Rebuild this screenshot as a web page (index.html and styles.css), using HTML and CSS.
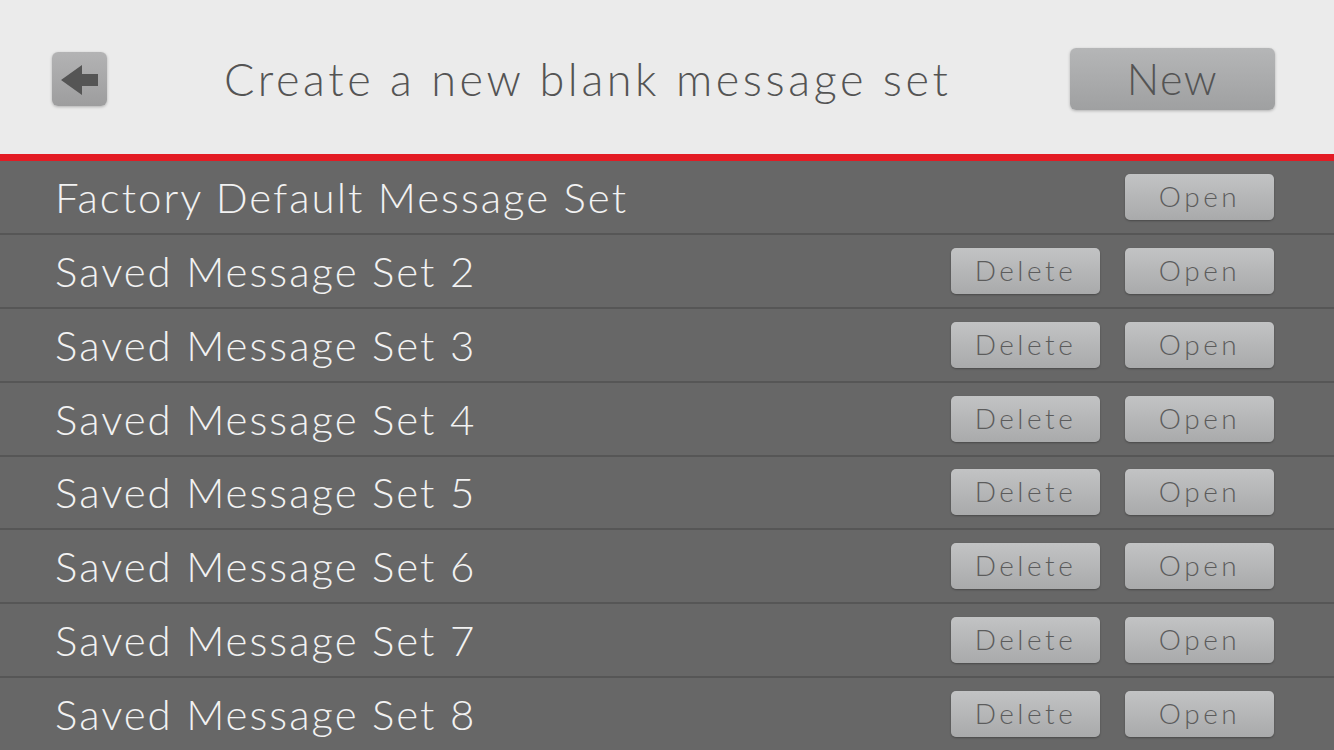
FILE: index.html
```html
<!DOCTYPE html>
<html lang="en">
<head>
    <meta charset="UTF-8">
    <meta name="viewport" content="width=device-width, initial-scale=1.0">
    <title>Message Sets</title>
    <link rel="stylesheet" href="styles.css">
</head>
<body>

<div class="screen">
    <!-- Top bar -->
    <div class="top-bar">
        <button class="back-btn" type="button" aria-label="Back">
            <svg width="55" height="54" viewBox="0 0 55 54">
                <path d="M9 28 L30 13 L30 22 L46 22 L46 34 L30 34 L30 43 Z" fill="#555"/>
            </svg>
        </button>
        <h1 class="title">Create a new blank message set</h1>
        <button class="new-btn" type="button">New</button>
    </div>

    <!-- Saved sets list -->
    <div class="set-list">
        <div class="set-row">
            <span class="set-name">Factory Default Message Set</span>
            <div class="row-actions">
                <button class="row-btn" type="button">Open</button>
            </div>
        </div>
        <div class="set-row">
            <span class="set-name">Saved Message Set 2</span>
            <div class="row-actions">
                <button class="row-btn" type="button">Delete</button>
                <button class="row-btn" type="button">Open</button>
            </div>
        </div>
        <div class="set-row">
            <span class="set-name">Saved Message Set 3</span>
            <div class="row-actions">
                <button class="row-btn" type="button">Delete</button>
                <button class="row-btn" type="button">Open</button>
            </div>
        </div>
        <div class="set-row">
            <span class="set-name">Saved Message Set 4</span>
            <div class="row-actions">
                <button class="row-btn" type="button">Delete</button>
                <button class="row-btn" type="button">Open</button>
            </div>
        </div>
        <div class="set-row">
            <span class="set-name">Saved Message Set 5</span>
            <div class="row-actions">
                <button class="row-btn" type="button">Delete</button>
                <button class="row-btn" type="button">Open</button>
            </div>
        </div>
        <div class="set-row">
            <span class="set-name">Saved Message Set 6</span>
            <div class="row-actions">
                <button class="row-btn" type="button">Delete</button>
                <button class="row-btn" type="button">Open</button>
            </div>
        </div>
        <div class="set-row">
            <span class="set-name">Saved Message Set 7</span>
            <div class="row-actions">
                <button class="row-btn" type="button">Delete</button>
                <button class="row-btn" type="button">Open</button>
            </div>
        </div>
        <div class="set-row">
            <span class="set-name">Saved Message Set 8</span>
            <div class="row-actions">
                <button class="row-btn" type="button">Delete</button>
                <button class="row-btn" type="button">Open</button>
            </div>
        </div>
    </div>
</div>

</body>
</html>
```

FILE: styles.css
```css
/* Reset */
* {
    margin: 0;
    padding: 0;
    box-sizing: border-box;
}

body {
    font-family: Lato, "Open Sans", sans-serif;
    font-weight: 300;
    background-color: #676767;
    width: 1334px;
    height: 750px;
    overflow: hidden;
}

.screen {
    display: flex;
    flex-direction: column;
    height: 750px;
}

/* Header */
.top-bar {
    height: 161px;
    flex-shrink: 0;
    display: flex;
    align-items: center;
    padding: 3px 59px 0 52px;
    background-color: #ebebeb;
    border-bottom: 7px solid #e31b23;
}

button {
    font-family: inherit;
    font-weight: 300;
    border: none;
    cursor: pointer;
}

.back-btn {
    width: 55px;
    height: 54px;
    border-radius: 6px;
    background: linear-gradient(#b3b3b4, #9d9d9e);
    box-shadow: 0 1px 3px rgba(0, 0, 0, 0.25);
    display: flex;
}

.title {
    flex: 1;
    margin-left: 117px;
    font-size: 45px;
    font-weight: 300;
    color: #545454;
    letter-spacing: 3.6px;
}

.new-btn {
    width: 205px;
    height: 62px;
    border-radius: 6px;
    background: linear-gradient(#b5b6b7, #9fa0a1);
    box-shadow: 0 1px 3px rgba(0, 0, 0, 0.25);
    color: #545454;
    font-size: 43px;
    letter-spacing: 1.5px;
}

/* List */
.set-list {
    flex: 1;
    display: flex;
    flex-direction: column;
}

.set-row {
    flex: 1;
    display: flex;
    align-items: center;
    padding: 0 60px 0 55px;
    border-top: 2px solid #565656;
}

.set-row:first-child {
    border-top: none;
}

.set-name {
    flex: 1;
    color: #f2f2f2;
    font-size: 42px;
    letter-spacing: 2px;
}

.row-actions {
    display: flex;
    gap: 25px;
}

.row-btn {
    width: 149px;
    height: 46px;
    border-radius: 5px;
    background: linear-gradient(#c2c3c4, #a9aaab);
    box-shadow: 0 1px 2px rgba(0, 0, 0, 0.3);
    color: #5c5c5c;
    font-size: 28px;
    letter-spacing: 3.5px;
    padding-bottom: 2px;
}
```
